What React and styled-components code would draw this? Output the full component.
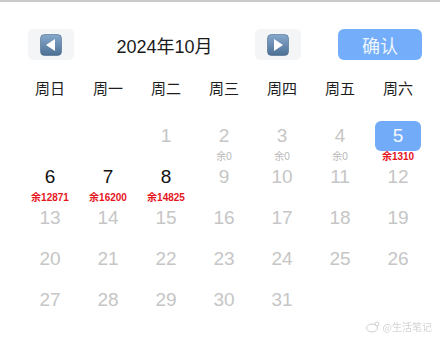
import React from "react";
import styled, { createGlobalStyle } from "styled-components";

const Global = createGlobalStyle`
  html, body { margin: 0; padding: 0; background: #fff; }
  body { font-family: "Liberation Sans", "Noto Sans CJK SC", Arial, sans-serif; }
`;

const Page = styled.div`
  position: relative;
  width: 440px;
  height: 340px;
  border-top: 2px solid #cacaca;
  box-sizing: border-box;
  overflow: hidden;
`;

const Header = styled.div`
  display: flex;
  align-items: center;
  height: 31px;
  margin-top: 27px;
  padding-left: 28px;
`;

const NavButton = styled.button`
  width: 46px;
  height: 31px;
  border: none;
  border-radius: 5px;
  background: #f4f5f7;
  display: flex;
  align-items: center;
  justify-content: center;
  padding: 0;
`;

const Title = styled.div`
  width: 181px;
  text-align: center;
  font-size: 18px;
  color: #1a1a1a;
  font-family: "Liberation Sans", "Noto Sans CJK SC", sans-serif;
`;

const Confirm = styled.button`
  margin-left: 37px;
  width: 84px;
  height: 31px;
  border: none;
  border-radius: 6px;
  background: #74aefa;
  color: #eef5ff;
  font-size: 18px;
  font-family: "Noto Sans CJK SC", sans-serif;
  padding: 0;
`;

const Week = styled.div`
  display: grid;
  grid-template-columns: repeat(7, 58px);
  margin: 18px 0 0 21px;
  height: 20px;
  align-items: center;
`;

const WeekDay = styled.div`
  text-align: center;
  font-size: 15px;
  color: #1e1e1e;
  font-family: "Noto Sans CJK SC", sans-serif;
  line-height: 20px;
`;

const Days = styled.div`
  display: grid;
  grid-template-columns: repeat(7, 58px);
  grid-auto-rows: 41px;
  margin: 23px 0 0 21px;
`;

const Cell = styled.div`
  display: flex;
  flex-direction: column;
  align-items: center;
`;

const Num = styled.div`
  width: 46px;
  height: 30px;
  border-radius: 6px;
  display: flex;
  align-items: center;
  justify-content: center;
  font-size: 19px;
  background: ${(p) => (p.$selected ? "#72acf9" : "transparent")};
  color: ${(p) => (p.$selected ? "#f2f7ff" : p.$active ? "#111" : "#c6c6c6")};
`;

const Sub = styled.div`
  height: 11px;
  line-height: 12px;
  font-size: 10px;
  white-space: nowrap;
  font-family: "Liberation Sans", "Noto Sans CJK SC", sans-serif;
  font-weight: ${(p) => (p.$red ? 700 : 400)};
  color: ${(p) => (p.$red ? "#e5161c" : "#b8b8b8")};
`;

const Watermark = styled.div`
  position: absolute;
  right: 8px;
  bottom: 6px;
  display: flex;
  align-items: center;
  gap: 3px;
  font-size: 10px;
  color: #d4d4d4;
  font-family: "Noto Sans CJK SC", sans-serif;
  filter: blur(0.4px);
`;

const Arrow = ({ dir }) => (
  <svg width="22" height="22" viewBox="0 0 22 22">
    <defs>
      <linearGradient id={`g${dir}`} x1="0" y1="0" x2="0" y2="1">
        <stop offset="0" stopColor="#86a9cc" />
        <stop offset="1" stopColor="#4c6f95" />
      </linearGradient>
    </defs>
    <rect x="0.5" y="0.5" width="21" height="21" rx="4" fill={`url(#g${dir})`} stroke="#4a6a8c" strokeWidth="0.6" />
    {dir === "left" ? (
      <polygon points="15,5 15,17 6,11" fill="#fff" />
    ) : (
      <polygon points="7,5 7,17 16,11" fill="#fff" />
    )}
  </svg>
);

const weekdays = ["周日", "周一", "周二", "周三", "周四", "周五", "周六"];
const subs = { 2: "余0", 3: "余0", 4: "余0", 5: "余1310", 6: "余12871", 7: "余16200", 8: "余14825" };
const red = { 5: 1, 6: 1, 7: 1, 8: 1 };
const active = { 6: 1, 7: 1, 8: 1 };

export default function App() {
  const cells = [];
  for (let i = 0; i < 2; i++) cells.push(<Cell key={`e${i}`} />);
  for (let d = 1; d <= 31; d++) {
    cells.push(
      <Cell key={d}>
        <Num $selected={d === 5} $active={!!active[d]}>{d}</Num>
        {subs[d] && <Sub $red={!!red[d]}>{subs[d]}</Sub>}
      </Cell>
    );
  }
  return (
    <>
      <Global />
      <Page>
        <Header>
          <NavButton><Arrow dir="left" /></NavButton>
          <Title>2024年10月</Title>
          <NavButton><Arrow dir="right" /></NavButton>
          <Confirm>确认</Confirm>
        </Header>
        <Week>
          {weekdays.map((w) => <WeekDay key={w}>{w}</WeekDay>)}
        </Week>
        <Days>{cells}</Days>
        <Watermark>
          <svg width="14" height="12" viewBox="0 0 14 12">
            <ellipse cx="6" cy="7" rx="5.5" ry="4" fill="none" stroke="#cfcfcf" strokeWidth="1" />
            <circle cx="11" cy="3" r="2" fill="none" stroke="#cfcfcf" strokeWidth="1" />
          </svg>
          <span>@生活笔记</span>
        </Watermark>
      </Page>
    </>
  );
}
